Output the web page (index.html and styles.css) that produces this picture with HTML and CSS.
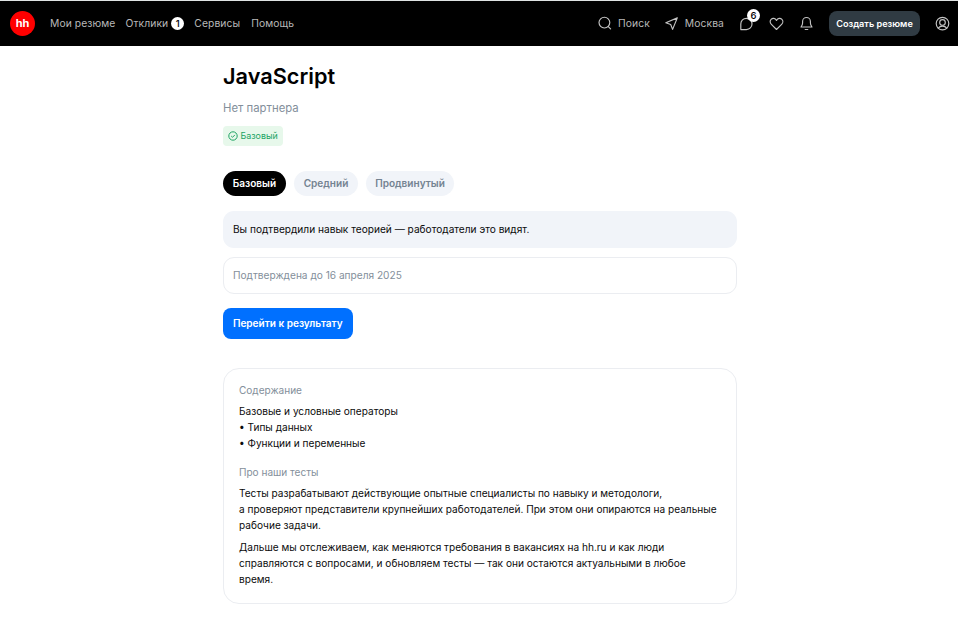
FILE: index.html
```html
<!DOCTYPE html>
<html lang="ru">
<head>
<meta charset="utf-8">
<title>JavaScript</title>
<link rel="stylesheet" href="styles.css">
</head>
<body>
<header class="topbar">
  <a class="logo">hh</a>
  <nav class="nav">
    <a class="nav-resumes">Мои резюме</a>
    <a class="nav-responses">Отклики<span class="count">1</span></a>
    <a class="nav-services">Сервисы</a>
    <a class="nav-help">Помощь</a>
  </nav>
  <div class="tools">
    <a class="tool search"><svg class="icon" viewBox="0 0 16 16"><circle cx="7.4" cy="7.6" r="5.4"/><path d="M11.3 11.6 13.6 13.9"/></svg><span>Поиск</span></a>
    <a class="tool city"><svg class="icon" viewBox="0 0 16 16"><path d="M13.3 2.9 1.8 7.8l4.9 1.7 1.9 4.9z"/></svg><span>Москва</span></a>
    <a class="chat"><svg class="icon" viewBox="0 0 16 16"><path d="M8.4 2.3a5.6 5.6 0 0 0-5.6 5.6v5.7h5.6A5.6 5.6 0 0 0 14 8 5.6 5.6 0 0 0 8.4 2.3z"/></svg><span class="count unread">6</span></a>
    <a class="heart"><svg class="icon" viewBox="0 0 16 16"><path d="M8.5 13.5 3.4 8.4C1.8 6.8 1.8 4.6 3.1 3.3 4.6 1.8 7.2 2 8.5 4.4c1.3-2.4 3.9-2.6 5.4-1.1 1.3 1.3 1.3 3.5-.3 5.1z"/></svg></a>
    <a class="bell"><svg class="icon" viewBox="0 0 16 16"><path d="M3 11h11c-1-1.2-1.6-2.2-1.6-4V5.4a3.9 3.9 0 0 0-7.8 0V7c0 1.8-.6 2.8-1.6 4zM7.2 13.5h2.6"/></svg></a>
    <button class="create">Создать резюме</button>
    <a class="profile"><svg class="icon" viewBox="0 0 16 16"><circle cx="8.5" cy="7.6" r="6.3"/><circle cx="8.5" cy="6.4" r="2.8"/><path d="M4.3 12.1c2-2.7 6.4-2.7 8.4 0"/></svg></a>
  </div>
</header>
<main class="page">
  <h1 class="title">JavaScript</h1>
  <p class="partner">Нет партнера</p>
  <div class="level"><svg class="check" viewBox="0 0 10 10"><circle cx="5" cy="5" r="4.2"/><path d="m3.2 5 1.3 1.3 2.4-2.4"/></svg><span>Базовый</span></div>
  <div class="tabs">
    <button class="tab tab-basic active">Базовый</button>
    <button class="tab tab-middle">Средний</button>
    <button class="tab tab-advanced">Продвинутый</button>
  </div>
  <div class="notice">Вы подтвердили навык теорией — работодатели это видят.</div>
  <div class="valid">Подтверждена до 16 апреля 2025</div>
  <button class="result">Перейти к результату</button>
  <section class="about">
    <h2>Содержание</h2>
    <p>Базовые и условные операторы<br>• Типы данных<br>• Функции и переменные</p>
    <h2 class="tests">Про наши тесты</h2>
    <p>Тесты разрабатывают действующие опытные специалисты по навыку и методологи,<br>а проверяют представители крупнейших работодателей. При этом они опираются на реальные<br>рабочие задачи.</p>
    <p class="next">Дальше мы отслеживаем, как меняются требования в вакансиях на hh.ru и как люди<br>справляются с вопросами, и обновляем тесты — так они остаются актуальными в любое<br>время.</p>
  </section>
</main>
</body>
</html>
```
FILE: styles.css
```css
* { box-sizing: border-box; }
body { margin: 0; background: #fff; color: #0b0b0c; font: 10.15px/16.2px Inter, "Liberation Sans", sans-serif; }
h1, h2, p { margin: 0; font-weight: 400; }
button { border: 0; padding: 0; font-family: inherit; white-space: nowrap; }
.topbar { height: 46px; background: #000; border-top: 1px solid #dfe3e3; display: flex; align-items: center; padding: 0 8px 0 10px; color: #b8b8b8; font-size: 10.3px; letter-spacing: .1px; }
.logo { width: 25px; height: 25px; border-radius: 50%; background: #f00; color: #fff; font-weight: 700; font-size: 11px; line-height: 24px; text-align: center; letter-spacing: 0; }
.nav { display: flex; margin-left: 15px; gap: 10px; white-space: nowrap; }
.nav a { display: flex; align-items: center; }
.count { width: 13px; height: 13px; border-radius: 50%; background: #fff; color: #000; font-size: 9.5px; font-weight: 500; line-height: 13px; text-align: center; letter-spacing: 0; }
.nav .count { margin-left: 3px; }
.nav-help { margin-left: 1px; }
.tools { margin-left: auto; display: flex; align-items: center; }
.icon { display: block; width: 16px; height: 16px; fill: none; stroke: #c4c4c4; stroke-width: 1.15; stroke-linejoin: round; stroke-linecap: round; }
.tool { display: flex; align-items: center; gap: 4.5px; }
.city { margin-left: 14.5px; }
.chat { position: relative; margin-left: 14px; }
.unread { position: absolute; left: 9px; top: -7px; }
.heart, .bell { margin-left: 14px; }
.create { margin: 0 14px 0 15px; width: 91px; height: 25px; border-radius: 8px; background: #303b43; color: #fff; font-size: 9.15px; font-weight: 600; }
.page { width: 514px; margin-left: 223px; display: flex; flex-direction: column; align-items: flex-start; }
.title { margin-top: 16px; font-size: 21.7px; line-height: 28px; font-weight: 600; color: #000; }
.partner { margin-top: 10px; font-size: 11.35px; line-height: 16px; color: #848f9b; }
.level { margin-top: 10px; width: 60px; height: 20px; border-radius: 4px; background: #e7f8eb; color: #20a464; display: flex; align-items: center; gap: 2.5px; padding-left: 5px; font-size: 8.9px; }
.check { width: 10px; height: 10px; flex: none; fill: none; stroke: #20a464; stroke-width: 1; }
.tabs { margin-top: 25px; display: flex; gap: 8px; }
.tab { height: 25px; padding-bottom: 2px; border-radius: 13px; background: #f1f4f9; color: #748391; font-size: 10.05px; font-weight: 600; }
.active { background: #000; color: #fff; }
.tab-basic { width: 63px; }
.tab-middle { width: 64px; }
.tab-advanced { width: 88px; }
.notice, .valid { width: 100%; height: 37px; border-radius: 11px; padding: 0 10px; line-height: 37px; }
.notice { margin-top: 15px; background: #f1f4f9; }
.valid { margin-top: 9px; border: 1px solid #ebedf1; color: #848f9b; padding: 0 9px; line-height: 35px; }
.result { margin-top: 14px; width: 129.5px; height: 30.5px; padding-bottom: 1px; border-radius: 8px; background: #0070ff; color: #fff; font-size: 10.05px; font-weight: 600; }
.about { margin-top: 29.5px; width: 100%; height: 236px; border: 1px solid #ebedf1; border-radius: 16px; padding: 13px 15px; white-space: nowrap; font-size: 10.1px; line-height: 16.3px; }
.about h2 { font-size: 10.05px; line-height: 16px; color: #848f9b; margin-bottom: 4.5px; }
.about .tests { margin-top: 13px; }
.about .next { margin-top: 5px; }
```
